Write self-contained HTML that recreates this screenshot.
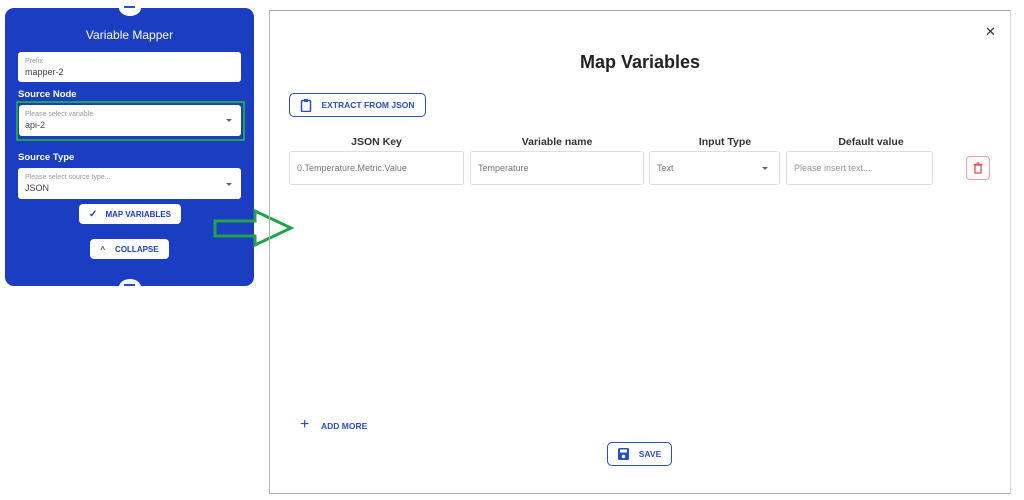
<!DOCTYPE html>
<html><head><meta charset="utf-8"><style>
*{box-sizing:border-box;margin:0;padding:0}
body{width:1024px;height:500px;background:#fff;font-family:"Liberation Sans",sans-serif;position:relative;overflow:hidden}
.abs{position:absolute}
.panel{left:5px;top:8px;width:249px;height:278px;background:#1a3dc2;border-radius:9px}
.knob{width:22px;height:16px;background:#fff;border-radius:50%;}
.inp{background:#fff;border-radius:3px}
.sm{font-size:7px;color:#999}
.val{font-size:9px;color:#444}
.lbl{color:#fff;font-weight:bold;font-size:9.5px}
.btnw{background:#fff;border-radius:4px;color:#1a3dc2;font-weight:bold;font-size:8px;display:flex;align-items:center;justify-content:center}
.modal{left:269px;top:10px;width:742px;height:484px;border:1.5px solid #b0b0b0;border-right-color:#ddd;border-top-color:#aaa}
.field{border:1px solid #ddd;border-radius:3px;height:34px;font-size:9px;color:#777;display:flex;align-items:center;padding-left:7px;top:151px}
.hd{font-weight:bold;font-size:10.5px;color:#333;top:136px;text-align:center}
.ob{border:1.3px solid #2a4fc4;border-radius:5px;color:#2a4fc4;font-weight:bold;font-size:8.5px;display:flex;align-items:center;justify-content:center}
</style></head><body>
<div class="abs panel"></div>
<div class="abs knob" style="left:119px;top:0px"></div>
<div class="abs" style="left:124px;top:6px;width:11px;height:2px;background:#2a4fc4"></div>
<div class="abs knob" style="left:119px;top:279px"></div>
<div class="abs" style="left:124px;top:284px;width:11px;height:2px;background:#2a4fc4"></div>
<div class="abs" style="left:5px;top:28px;width:249px;text-align:center;color:#fff;font-size:12px">Variable Mapper</div>
<div class="abs inp" style="left:18px;top:52px;width:223px;height:30px"></div>
<div class="abs sm" style="left:25px;top:58px">Prefix</div>
<div class="abs val" style="left:25px;top:67px">mapper-2</div>
<div class="abs lbl" style="left:18px;top:89px">Source Node</div>
<div class="abs" style="left:16px;top:101px;width:229px;height:40px;border:2.5px solid #22a34a"></div>
<div class="abs inp" style="left:19px;top:105px;width:222px;height:31px"></div>
<div class="abs sm" style="left:25px;top:111px">Please select variable</div>
<div class="abs val" style="left:25px;top:120px">api-2</div>
<div class="abs" style="left:226px;top:119px;border:3px solid transparent;border-top:3px solid #666"></div>
<div class="abs lbl" style="left:18px;top:152px">Source Type</div>
<div class="abs inp" style="left:18px;top:168px;width:223px;height:31px"></div>
<div class="abs sm" style="left:25px;top:174px">Please select source type...</div>
<div class="abs val" style="left:25px;top:183px">JSON</div>
<div class="abs" style="left:226px;top:183px;border:3px solid transparent;border-top:3px solid #666"></div>
<div class="abs btnw" style="left:79px;top:204px;width:102px;height:20px"><span style="margin-right:8px;font-size:10px">&#10003;</span>MAP VARIABLES</div>
<div class="abs btnw" style="left:90px;top:239px;width:79px;height:20px"><span style="margin-right:10px">^</span>COLLAPSE</div>
<svg class="abs" style="left:213px;top:208px" width="82" height="40"><path d="M2 13 H42 V3 L78 20 L42 37 V28 H2 Z" fill="none" stroke="#22a34a" stroke-width="3"/></svg>
<div class="abs modal"></div>
<div class="abs" style="left:985px;top:24px;font-size:13px;color:#333">✕</div>
<div class="abs" style="left:269px;top:52px;width:742px;text-align:center;font-weight:bold;font-size:18px;color:#222">Map Variables</div>
<div class="abs ob" style="left:289px;top:93px;width:137px;height:24px;border-radius:5px"><svg width="12" height="14" style="margin-right:9px"><rect x="1.5" y="2.5" width="9" height="11" rx="1" fill="none" stroke="#2a4fc4" stroke-width="1.5"/><rect x="4" y="1" width="4" height="3" fill="#2a4fc4"/></svg>EXTRACT FROM JSON</div>
<div class="abs hd" style="left:289px;width:175px">JSON Key</div>
<div class="abs hd" style="left:470px;width:174px">Variable name</div>
<div class="abs hd" style="left:649px;width:152px">Input Type</div>
<div class="abs hd" style="left:786px;width:170px">Default value</div>
<div class="abs field" style="left:289px;width:175px">0.Temperature.Metric.Value</div>
<div class="abs field" style="left:470px;width:174px">Temperature</div>
<div class="abs field" style="left:649px;width:131px">Text</div>
<div class="abs" style="left:762px;top:167px;border:3px solid transparent;border-top:3px solid #666"></div>
<div class="abs field" style="left:786px;width:147px;color:#999">Please insert text...</div>
<div class="abs" style="left:966px;top:156px;width:24px;height:24px;border:1px solid #f0a0a0;border-radius:4px"></div>
<svg class="abs" style="left:972px;top:162px" width="12" height="12"><rect x="3" y="3" width="6" height="8" fill="none" stroke="#e05050" stroke-width="1.3"/><line x1="1.5" y1="2.5" x2="10.5" y2="2.5" stroke="#e05050" stroke-width="1.3"/><line x1="4.5" y1="1" x2="7.5" y2="1" stroke="#e05050" stroke-width="1.3"/></svg>
<div class="abs" style="left:300px;top:417px;color:#2a4fc4;font-size:16px;line-height:16px">+</div>
<div class="abs" style="left:321px;top:421px;color:#2a4fc4;font-weight:bold;font-size:8.5px">ADD MORE</div>
<div class="abs ob" style="left:607px;top:442px;width:65px;height:24px"><svg width="11" height="12" style="margin-right:10px"><rect x="0" y="0" width="11" height="12" rx="1.5" fill="#2a4fc4"/><rect x="2" y="1.5" width="7" height="3" fill="#fff"/><circle cx="5.5" cy="8.5" r="1.7" fill="#fff"/></svg>SAVE</div>
</body></html>
